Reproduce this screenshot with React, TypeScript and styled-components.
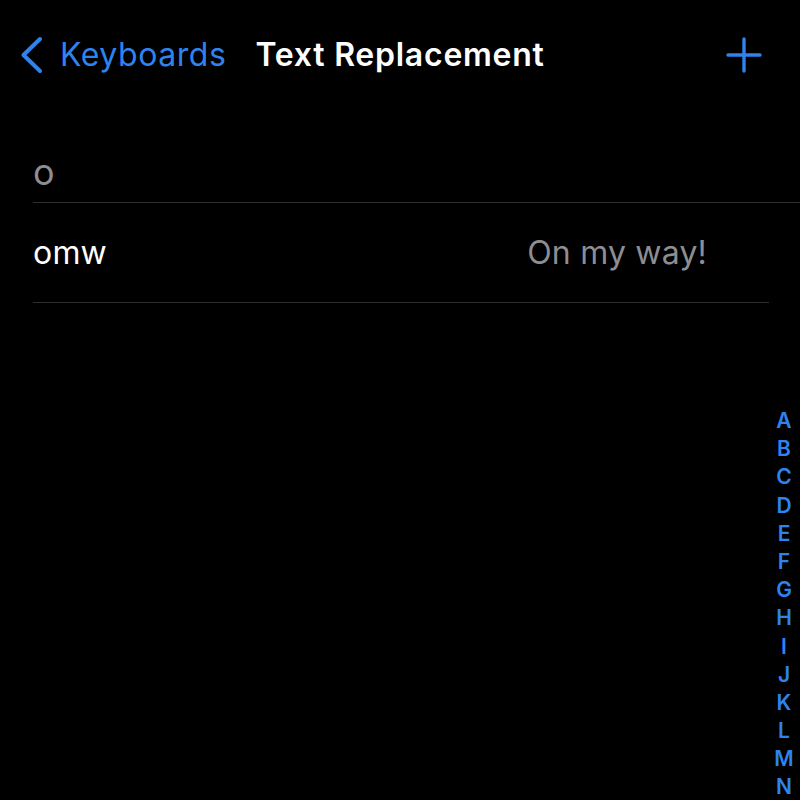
import React from 'react';
import styled, { createGlobalStyle } from 'styled-components';

const GlobalStyle = createGlobalStyle`
  html, body {
    margin: 0;
    padding: 0;
    background: #000;
  }
  body {
    font-family: Inter, "Noto Sans", "Liberation Sans", sans-serif;
    -webkit-font-smoothing: antialiased;
  }
`;

const blue = '#2f83ee';
const gray = '#8d8d92';
const separator = '#2e2e30';

const Screen = styled.div`
  position: relative;
  height: 800px;
  overflow: hidden;
  background: #000;
  color: #fff;
`;

const NavBar = styled.header`
  display: flex;
  align-items: center;
  height: 110px;
  padding: 0 38px 0 19px;
`;

const BackButton = styled.button`
  display: flex;
  align-items: center;
  gap: 17px;
  padding: 0;
  border: 0;
  background: none;
  color: ${blue};
  font: inherit;
  font-size: 32px;
  letter-spacing: 0.55px;
  line-height: 38px;
  cursor: pointer;
`;

const Title = styled.h1`
  margin: 0 0 0 29px;
  font-size: 32px;
  font-weight: 600;
  letter-spacing: 0.75px;
  line-height: 38px;
  color: #fff;
`;

const AddButton = styled.button`
  display: flex;
  margin-left: auto;
  padding: 0;
  border: 0;
  background: none;
  cursor: pointer;
`;

const SectionHeader = styled.div`
  margin-left: 33px;
  padding: 44px 0 12px 0;
  font-size: 36px;
  line-height: 36px;
  color: ${gray};
  border-bottom: 1px solid ${separator};
`;

const Row = styled.div`
  display: flex;
  align-items: center;
  justify-content: space-between;
  height: 99px;
  margin: 0 31px 0 33px;
  padding-right: 62px;
  border-bottom: 1px solid ${separator};
  font-size: 32px;
  letter-spacing: 0.2px;
`;

const Phrase = styled.span<{ $muted?: boolean }>`
  color: ${(p) => (p.$muted ? gray : '#fff')};
`;

const IndexBar = styled.nav`
  position: absolute;
  top: 407px;
  right: 0;
  width: 32px;
  display: flex;
  flex-direction: column;
  align-items: center;
`;

const IndexLetter = styled.span`
  height: 28.2px;
  line-height: 28.2px;
  font-size: 21px;
  font-weight: 600;
  color: ${blue};
`;

const Chevron = () => (
  <svg width="24" height="38" viewBox="0 0 24 38" fill="none">
    <path d="M21 3 L4.5 19 L21 35" stroke={blue} strokeWidth="4" strokeLinecap="round" strokeLinejoin="round" />
  </svg>
);

const Plus = () => (
  <svg width="36" height="36" viewBox="0 0 36 36" fill="none">
    <path d="M18 2 V34 M2 18 H34" stroke={blue} strokeWidth="3.4" strokeLinecap="round" />
  </svg>
);

const letters = 'ABCDEFGHIJKLMN'.split('');

const entries = [{ shortcut: 'omw', phrase: 'On my way!' }];

export default function App() {
  return (
    <Screen>
      <GlobalStyle />
      <NavBar>
        <BackButton>
          <Chevron />
          Keyboards
        </BackButton>
        <Title>Text Replacement</Title>
        <AddButton aria-label="Add">
          <Plus />
        </AddButton>
      </NavBar>

      <SectionHeader>o</SectionHeader>
      {entries.map((e) => (
        <Row key={e.shortcut}>
          <Phrase>{e.shortcut}</Phrase>
          <Phrase $muted>{e.phrase}</Phrase>
        </Row>
      ))}

      <IndexBar>
        {letters.map((l) => (
          <IndexLetter key={l}>{l}</IndexLetter>
        ))}
      </IndexBar>
    </Screen>
  );
}
